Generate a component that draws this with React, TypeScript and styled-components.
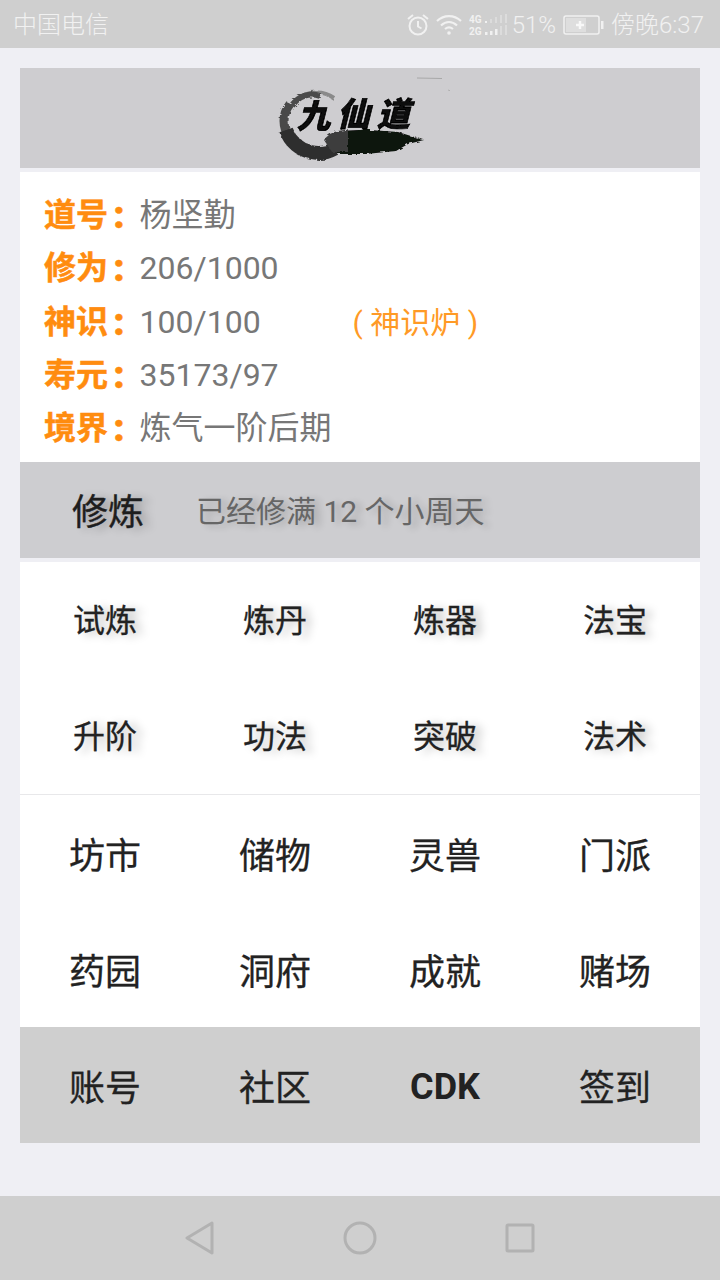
import React from "react";
import styled, { createGlobalStyle } from "styled-components";

const Global = createGlobalStyle`
  html, body { margin: 0; padding: 0; }
  body { background: #efeff4; font-family: Roboto, "Noto Sans CJK SC", sans-serif; }
`;

const Screen = styled.div`
  width: 720px;
  height: 1280px;
  display: flex;
  flex-direction: column;
  background: #efeff4;
  overflow: hidden;
`;

const StatusBar = styled.div`
  height: 48px;
  flex: none;
  background: #cfcfcf;
  color: #f1f1f1;
  display: flex;
  align-items: center;
  justify-content: space-between;
  padding: 2px 16px 0 13px;
  box-sizing: border-box;
  font-size: 24px;
  line-height: 46px;
`;

const Carrier = styled.span`
  font-weight: 300;
`;

const StatusRight = styled.div`
  display: flex;
  align-items: center;
`;

const StatusText = styled.span<{ $left: number }>`
  margin-left: ${(p) => p.$left}px;
  font-weight: 300;
`;

const StatusIcon = styled.svg<{ $left?: number }>`
  display: block;
  margin-left: ${(p) => p.$left ?? 0}px;
`;

const Main = styled.div`
  flex: 1;
  padding: 20px 20px 0;
  display: flex;
  flex-direction: column;
`;

const LogoBar = styled.div`
  height: 100px;
  background: #cecdd0;
  display: flex;
  align-items: center;
  justify-content: center;
  margin-bottom: 4px;
`;

const InfoPanel = styled.div`
  height: 290px;
  box-sizing: border-box;
  background: #fff;
  padding: 17px 0 0 24px;
`;

const InfoRow = styled.div`
  display: flex;
  height: 53.3px;
  line-height: 53.3px;
  font-size: 32px;
  color: #777;
`;

const InfoLabel = styled.span`
  width: 96px;
  flex: none;
  display: flex;
  color: #ff8c0f;
  font-weight: 700;
  white-space: nowrap;
  -webkit-text-stroke: 0.5px #ff8c0f;
`;

const LabelColon = styled.span`
  width: 32px;
  text-align: center;
  margin-left: -5px;
  font-size: 38px;
  font-weight: 900;
`;

const InfoValue = styled.span`
  width: 213px;
  flex: none;
  margin-left: -0.5px;
`;

const FurnaceLink = styled.span`
  color: #ff9a26;
  font-size: 30px;
  white-space: pre;
`;

const TrainBar = styled.div`
  height: 96px;
  background: #cdcdd0;
  display: flex;
  align-items: center;
  padding-left: 52px;
  margin-bottom: 4px;
`;

const TrainTitle = styled.span`
  width: 126px;
  flex: none;
  font-size: 36px;
  color: #1e1e1e;
  margin-top: -2px;
  -webkit-text-stroke: 0.4px #1e1e1e;
  text-shadow: 7px 2px 8px rgba(0, 0, 0, 0.28);
`;

const TrainNote = styled.span`
  font-size: 30px;
  color: #666;
  margin: -2px 0 0 -2px;
  text-shadow: 6px 2px 7px rgba(0, 0, 0, 0.2);
`;

const Menu = styled.div<{ $tone: "white" | "grey"; $rule?: boolean }>`
  display: grid;
  grid-template-columns: repeat(4, 170px);
  grid-auto-rows: 116px;
  background: ${(p) => (p.$tone === "grey" ? "#cfcfcf" : "#fff")};
  border-bottom: ${(p) => (p.$rule ? "1px solid #e8e8ea" : "none")};
`;

const MenuItem = styled.div<{ $small?: boolean; $bold?: boolean }>`
  display: flex;
  align-items: center;
  justify-content: center;
  color: #222;
  font-size: ${(p) => (p.$small ? 32 : 36)}px;
  font-weight: ${(p) => (p.$bold ? 700 : 400)};
  -webkit-text-stroke: ${(p) => (p.$bold ? "0" : "0.3px #222")};
  padding-bottom: ${(p) => (p.$small ? 4 : 0)}px;
  box-sizing: border-box;
  text-shadow: ${(p) => (p.$small ? "7px 2px 8px rgba(0, 0, 0, 0.25)" : "none")};
`;

const CdkLabel = styled.span`
  position: relative;
  top: 2px;
`;

const NavBar = styled.div`
  height: 84px;
  flex: none;
  background: #cfcfcf;
  display: flex;
  align-items: center;
  justify-content: center;
  gap: 128px;
`;

const info = [
  ["道号", "杨坚勤"],
  ["修为", "206/1000"],
  ["神识", "100/100"],
  ["寿元", "35173/97"],
  ["境界", "炼气一阶后期"],
];

const menuA = ["试炼", "炼丹", "炼器", "法宝", "升阶", "功法", "突破", "法术"];
const menuB = ["坊市", "储物", "灵兽", "门派", "药园", "洞府", "成就", "赌场"];

function Logo() {
  return (
    <svg width="180" height="100" viewBox="0 0 180 100" style={{ display: "block" }}>
      <defs>
        <filter id="brush" x="-10%" y="-10%" width="120%" height="120%">
          <feTurbulence type="fractalNoise" baseFrequency="0.18 0.35" numOctaves="2" seed="4" />
          <feDisplacementMap in="SourceGraphic" scale="4" />
          <feGaussianBlur stdDeviation="0.5" />
        </filter>
        <filter id="ink" x="-10%" y="-10%" width="120%" height="120%">
          <feTurbulence type="fractalNoise" baseFrequency="0.25" numOctaves="1" seed="9" />
          <feDisplacementMap in="SourceGraphic" scale="1.500" />
          <feGaussianBlur stdDeviation="0.3" />
        </filter>
      </defs>
      <g filter="url(#brush)">
        <path d="M64 30 C50 20 30 24 20 38" fill="none" stroke="#8a8a8a" strokeWidth="4" />
        <path d="M50 28 C40 24 28 28 22 38" fill="none" stroke="#4c4c4c" strokeWidth="6" />
        <path d="M20 36 C12 46 12 60 20 70" fill="none" stroke="#4a4a4a" strokeWidth="9" />
        <path d="M16 62 C24 86 56 92 70 76" fill="none" stroke="#2f2f2f" strokeWidth="14" />
        <path
          d="M62 66 C70 62 84 62 100 62 L 128 64 L 154 72 L 138 76 L 126 83 L 96 86 L 68 86 Z"
          fill="#111311"
        />
        <path d="M54 72 C60 64 68 62 78 62 L 78 84 L 62 84 Z" fill="#3c3c3c" />
      </g>
      <path d="M147 10 L172 10.500" stroke="#9e9e9e" strokeWidth="0.800" />
      <path d="M178 22 L181 23" stroke="#b0b0b0" strokeWidth="1" />
      <text
        fontFamily="'Noto Sans CJK SC', sans-serif"
        fontWeight="900"
        fontStyle="italic"
        fontSize="33"
        fill="#070707"
        stroke="#070707"
        strokeWidth="0.700"
        filter="url(#ink)"
      >
        <tspan x="27" y="60">九</tspan>
        <tspan x="67" y="58">仙</tspan>
        <tspan x="107" y="58">道</tspan>
      </text>
    </svg>
  );
}

export default function App() {
  return (
    <Screen>
      <Global />
      <StatusBar>
        <Carrier>中国电信</Carrier>
        <StatusRight>
          <StatusIcon width="24" height="26" viewBox="0 0 24 26" fill="none" stroke="#f1f1f1" strokeWidth="2">
            <circle cx="12" cy="14" r="8.500" />
            <path d="M12 9v5.500l3.500 2M2 7l5-4M22 7l-5-4" />
          </StatusIcon>
          <StatusIcon $left={6} width="26" height="22" viewBox="0 0 26 22" fill="none" stroke="#f1f1f1" strokeWidth="2.200">
            <path d="M1 7c7-6.500 17-6.500 24 0M5 11.500c5-4.500 11-4.500 16 0M9 15c2.500-2 5.500-2 8 0" />
            <circle cx="13" cy="19" r="1.800" fill="#f1f1f1" stroke="none" />
          </StatusIcon>
          <StatusIcon $left={7} width="40" height="24" viewBox="0 0 40 24">
            <text x="0" y="10" fontSize="10" fontWeight="700" fill="#f1f1f1" fontFamily="Roboto, sans-serif">4G</text>
            <text x="0" y="22" fontSize="10" fontWeight="700" fill="#f1f1f1" fontFamily="Roboto, sans-serif">2G</text>
            <g fill="#f1f1f1">
              <rect x="16" y="8" width="2" height="2" />
              <rect x="16" y="19" width="2.500" height="3" />
              <rect x="21" y="18" width="2.500" height="4" />
              <rect x="26" y="16" width="2.500" height="6" />
            </g>
            <g fill="#dcdcdc">
              <rect x="21" y="6" width="2" height="4" />
              <rect x="26" y="4" width="2" height="6" />
              <rect x="31" y="2" width="2" height="8" />
              <rect x="36" y="1" width="2" height="9" />
              <rect x="31" y="13" width="2" height="9" />
              <rect x="36" y="12" width="2" height="10" />
            </g>
          </StatusIcon>
          <StatusText $left={3}>51%</StatusText>
          <StatusIcon $left={7} width="41" height="20" viewBox="0 0 41 20">
            <rect x="1" y="1" width="35" height="18" rx="2" fill="none" stroke="#f1f1f1" strokeWidth="1.500" />
            <rect x="3" y="3" width="20" height="14" fill="#dedede" />
            <path d="M13 10h8M17 6v8" stroke="#f8f8f8" strokeWidth="2.500" />
            <rect x="38" y="6" width="2.500" height="8" fill="#f1f1f1" />
          </StatusIcon>
          <StatusText $left={7}>傍晚6:37</StatusText>
        </StatusRight>
      </StatusBar>

      <Main>
        <LogoBar>
          <Logo />
        </LogoBar>
        <InfoPanel>
          {info.map(([label, value], i) => (
            <InfoRow key={label}>
              <InfoLabel>
                {label}
                <LabelColon>:</LabelColon>
              </InfoLabel>
              <InfoValue>{value}</InfoValue>
              {i === 2 && <FurnaceLink>( 神识炉 )</FurnaceLink>}
            </InfoRow>
          ))}
        </InfoPanel>
        <TrainBar>
          <TrainTitle>修炼</TrainTitle>
          <TrainNote>已经修满 12 个小周天</TrainNote>
        </TrainBar>
        <Menu $tone="white" $rule>
          {menuA.map((m) => (
            <MenuItem key={m} $small>{m}</MenuItem>
          ))}
        </Menu>
        <Menu $tone="white">
          {menuB.map((m) => (
            <MenuItem key={m}>{m}</MenuItem>
          ))}
        </Menu>
        <Menu $tone="grey">
          <MenuItem>账号</MenuItem>
          <MenuItem>社区</MenuItem>
          <MenuItem $bold>
            <CdkLabel>CDK</CdkLabel>
          </MenuItem>
          <MenuItem>签到</MenuItem>
        </Menu>
      </Main>

      <NavBar>
        <svg width="30" height="34" viewBox="0 0 30 34" fill="none" stroke="#b2b2b2" strokeWidth="3" strokeLinejoin="round">
          <path d="M27 2 L2 17 L27 32 Z" />
        </svg>
        <svg width="34" height="34" viewBox="0 0 34 34" fill="none" stroke="#b2b2b2" strokeWidth="3">
          <circle cx="17" cy="17" r="15" />
        </svg>
        <svg width="30" height="30" viewBox="0 0 30 30" fill="none" stroke="#b2b2b2" strokeWidth="3" strokeLinejoin="round">
          <rect x="2" y="2" width="26" height="26" rx="1" />
        </svg>
      </NavBar>
    </Screen>
  );
}
